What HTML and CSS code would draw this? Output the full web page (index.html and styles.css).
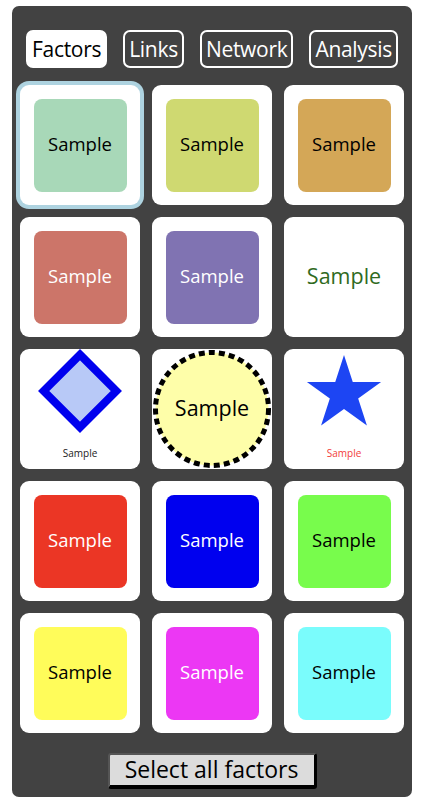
FILE: index.html
```html
<!DOCTYPE html>
<html>
<head>
<meta charset="utf-8">
<link rel="stylesheet" href="styles.css">
</head>
<body>
<div class="panel">
  <nav class="tabs">
    <div class="tab active">Factors</div>
    <div class="tab">Links</div>
    <div class="tab">Network</div>
    <div class="tab">Analysis</div>
  </nav>
  <div class="grid">
    <div class="card selected"><div class="swatch c-mint">Sample</div></div>
    <div class="card"><div class="swatch c-lime">Sample</div></div>
    <div class="card"><div class="swatch c-orange">Sample</div></div>

    <div class="card"><div class="swatch c-salmon light">Sample</div></div>
    <div class="card"><div class="swatch c-purple light">Sample</div></div>
    <div class="card plain"><span class="big green">Sample</span></div>

    <div class="card shape">
      <svg class="shape-svg" width="120" height="92" viewBox="0 0 120 92">
        <polygon points="60,5.7 96.3,42 60,78.3 23.7,42" fill="#b8c9f7" stroke="#0000ee" stroke-width="8" stroke-linejoin="miter"/>
      </svg>
      <span class="small dark">Sample</span>
    </div>
    <div class="card circle-card">
      <svg class="circle-svg" width="120" height="120" viewBox="0 0 120 120">
        <circle cx="60" cy="60" r="56.5" fill="#fefea9" stroke="#000" stroke-width="5" stroke-dasharray="6 4.1"/>
      </svg>
      <span class="big circle-label">Sample</span>
    </div>
    <div class="card shape">
      <svg class="shape-svg" width="120" height="92" viewBox="0 0 120 92">
        <polygon points="60,6 68.76,32.95 97.09,32.95 74.17,49.6 82.92,76.55 60,59.9 37.08,76.55 45.83,49.6 22.91,32.95 51.24,32.95" fill="#1d45f3"/>
      </svg>
      <span class="small red">Sample</span>
    </div>

    <div class="card"><div class="swatch c-red light">Sample</div></div>
    <div class="card"><div class="swatch c-blue light">Sample</div></div>
    <div class="card"><div class="swatch c-green">Sample</div></div>

    <div class="card"><div class="swatch c-yellow">Sample</div></div>
    <div class="card"><div class="swatch c-magenta light">Sample</div></div>
    <div class="card"><div class="swatch c-cyan">Sample</div></div>
  </div>
  <div class="footer">
    <button class="select-all">Select all factors</button>
  </div>
</div>
</body>
</html>
```
FILE: styles.css
```css
html, body {
  margin: 0;
  padding: 0;
  background: #ffffff;
}
body {
  font-family: "Open Sans", "Noto Sans", sans-serif;
}
.panel {
  margin: 6px 12px 0 12px;
  width: 400px;
  box-sizing: border-box;
  background: #424242;
  border-radius: 7px;
  padding: 24px 8px 8px 8px;
}
.tabs {
  display: flex;
  justify-content: center;
  gap: 16px;
}
.tab {
  height: 38px;
  box-sizing: border-box;
  border: 2px solid #ffffff;
  border-radius: 7px;
  padding: 0 4px;
  display: flex;
  align-items: center;
  color: #ffffff;
  font-size: 21px;
  letter-spacing: -0.3px;
}
.tab.active {
  background: #ffffff;
  color: #000000;
}
.grid {
  margin-top: 17px;
  display: grid;
  grid-template-columns: repeat(3, 120px);
  grid-auto-rows: 120px;
  gap: 12px;
  justify-content: center;
}
.card {
  background: #ffffff;
  border-radius: 9px;
  display: flex;
  align-items: center;
  justify-content: center;
  position: relative;
}
.card.selected {
  box-shadow: 0 0 0 4px #aed3e0;
}
.swatch {
  width: 93px;
  height: 93px;
  box-sizing: border-box;
  padding-bottom: 4px;
  border-radius: 8px;
  display: flex;
  align-items: center;
  justify-content: center;
  font-size: 18.5px;
  color: #000000;
}
.swatch.light { color: #ffffff; }
.c-mint { background: #a8d8b8; }
.c-lime { background: #cfd971; }
.c-orange { background: #d4a757; }
.c-salmon { background: #cc7569; }
.c-purple { background: #8073b2; }
.c-red { background: #eb3625; }
.c-blue { background: #0000ef; }
.c-green { background: #78fc4c; }
.c-yellow { background: #fffc5a; }
.c-magenta { background: #ec37f4; }
.c-cyan { background: #7afcfc; }
.big {
  font-size: 21.5px;
  padding-bottom: 4px;
}
.green { color: #2f6a21; }
.card.shape {
  flex-direction: column;
  justify-content: flex-start;
}
.shape-svg {
  display: block;
}
.small {
  font-size: 10px;
  margin-top: 5px;
}
.dark { color: #222222; }
.red { color: #f23d3a; }
.circle-svg {
  position: absolute;
  left: 0;
  top: 0;
}
.circle-label {
  position: relative;
  color: #000000;
}
.footer {
  margin-top: 20px;
  display: flex;
  justify-content: center;
}
.select-all {
  width: 209px;
  height: 36px;
  box-sizing: border-box;
  background: #dcdcdc;
  border-style: solid;
  border-width: 2px 3px 4px 2px;
  border-color: #555555 #000000 #000000 #555555;
  border-radius: 3px;
  font-family: "Open Sans", "Noto Sans", sans-serif;
  font-size: 23px;
  color: #000000;
  padding: 0 0 1px 0;
  line-height: 1;
}
```
